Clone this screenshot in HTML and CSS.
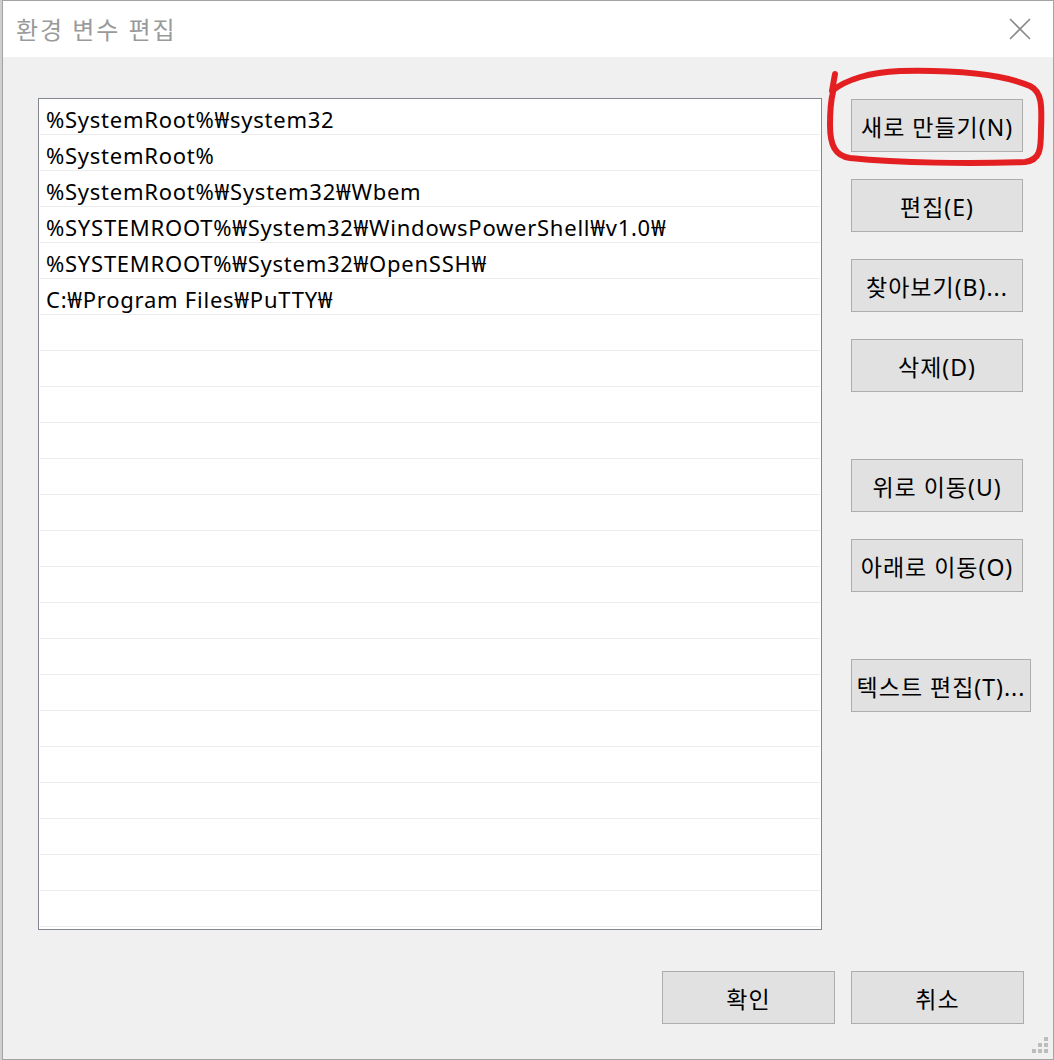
FILE: index.html
```html
<!DOCTYPE html>
<html lang="ko">
<head>
<meta charset="utf-8">
<title>환경 변수 편집</title>
<link rel="stylesheet" href="styles.css">
</head>
<body>
<div class="screen">
  <div class="edge"></div>
  <div class="window">
    <div class="titlebar">
      <span class="title">환경 변수 편집</span>
      <svg class="close" width="22" height="22" viewBox="0 0 22 22"><path d="M1 1 L21 21 M21 1 L1 21" stroke="#8a8a8a" stroke-width="1.6" fill="none"/></svg>
    </div>
    <div class="body">
      <div class="main">
        <div class="list">
          <div class="row">%SystemRoot%₩system32</div>
          <div class="row">%SystemRoot%</div>
          <div class="row">%SystemRoot%₩System32₩Wbem</div>
          <div class="row">%SYSTEMROOT%₩System32₩WindowsPowerShell₩v1.0₩</div>
          <div class="row">%SYSTEMROOT%₩System32₩OpenSSH₩</div>
          <div class="row">C:₩Program Files₩PuTTY₩</div>
          <div class="row"></div><div class="row"></div><div class="row"></div><div class="row"></div>
          <div class="row"></div><div class="row"></div><div class="row"></div><div class="row"></div>
          <div class="row"></div><div class="row"></div><div class="row"></div><div class="row"></div>
          <div class="row"></div><div class="row"></div><div class="row"></div><div class="row"></div>
          <div class="row"></div>
        </div>
        <div class="buttons">
          <div class="group">
            <button class="btn">새로 만들기(N)</button>
            <button class="btn">편집(E)</button>
            <button class="btn">찾아보기(B)...</button>
            <button class="btn">삭제(D)</button>
          </div>
          <div class="group">
            <button class="btn">위로 이동(U)</button>
            <button class="btn">아래로 이동(O)</button>
          </div>
          <div class="group">
            <button class="btn wide">텍스트 편집(T)...</button>
          </div>
        </div>
      </div>
      <div class="footer">
        <button class="btn foot">확인</button>
        <button class="btn foot">취소</button>
      </div>
      <svg class="grip" width="18" height="18" viewBox="0 0 18 18">
        <rect x="12" y="0" width="4" height="4" fill="#bdbdbd"/>
        <rect x="6" y="6" width="4" height="4" fill="#bdbdbd"/>
        <rect x="12" y="6" width="4" height="4" fill="#bdbdbd"/>
        <rect x="0" y="12" width="4" height="4" fill="#bdbdbd"/>
        <rect x="6" y="12" width="4" height="4" fill="#bdbdbd"/>
        <rect x="12" y="12" width="4" height="4" fill="#bdbdbd"/>
      </svg>
    </div>
  </div>
  <svg class="annot" width="1054" height="1060" viewBox="0 0 1054 1060">
    <path d="M835 74 L832 91 C845 80 870 72 900 71 C950 70 1000 73 1030 86 C1042 92 1042 105 1041 130 C1041 150 1040 160 1025 162 C970 164 900 163 850 158 C835 156 830 145 830 125 C830 110 831 100 833 92" fill="none" stroke="#e31f22" stroke-width="6" stroke-linecap="round" stroke-linejoin="round"/>
  </svg>
</div>
</body>
</html>
```
FILE: styles.css
```css
* { box-sizing: border-box; }
html, body { margin: 0; padding: 0; }
body {
  width: 1054px;
  height: 1060px;
  overflow: hidden;
  font-family: "Noto Sans", "Noto Sans CJK KR", sans-serif;
  background: #f0f0f0;
}
.screen {
  position: relative;
  display: flex;
  width: 1054px;
  height: 1060px;
}
.edge {
  width: 2px;
  height: 100%;
  background: #cfcfcf;
}
.window {
  width: 1052px;
  height: 1060px;
  border: 1px solid #a3a3a3;
  display: flex;
  flex-direction: column;
  background: #f0f0f0;
}
.titlebar {
  height: 56px;
  background: #ffffff;
  display: flex;
  align-items: center;
  justify-content: space-between;
  padding: 0 22px 0 13px;
  flex: none;
}
.title {
  font-family: "Noto Sans CJK KR", sans-serif;
  font-size: 24px;
  color: #9a9a9a;
  letter-spacing: 1.8px;
  margin-top: -1px;
}
.close { display: block; }
.body {
  position: relative;
  flex: 1;
  padding-top: 41px;
}
.main {
  display: flex;
  padding-left: 35px;
  gap: 29px;
}
.list {
  width: 784px;
  height: 832px;
  border: 1px solid #828790;
  background: #fff;
  padding: 0 1px;
  overflow: hidden;
}
.row {
  height: 36px;
  border-bottom: 1px solid #ececec;
  padding: 5px 0 0 6px;
  font-size: 22px;
  letter-spacing: 0.75px;
  line-height: 30px;
  color: #000;
  white-space: nowrap;
}
.buttons {
  display: flex;
  flex-direction: column;
  gap: 67px;
  padding-top: 1px;
}
.group {
  display: flex;
  flex-direction: column;
  gap: 27px;
}
.btn {
  width: 172px;
  height: 53px;
  background: #e1e1e1;
  border: 1px solid #adadad;
  font-family: "Noto Sans", "Noto Sans CJK KR", sans-serif;
  font-size: 23px;
  letter-spacing: 1px;
  color: #000;
  padding: 0;
  white-space: nowrap;
}
.btn.wide { width: 180px; }
.btn.foot { width: 173px; }
.footer {
  display: flex;
  justify-content: flex-end;
  gap: 16px;
  margin-top: 41px;
  padding-right: 29px;
}
.grip {
  position: absolute;
  right: 3px;
  bottom: 4px;
}
.annot {
  position: absolute;
  left: 0;
  top: 0;
  pointer-events: none;
}
```
